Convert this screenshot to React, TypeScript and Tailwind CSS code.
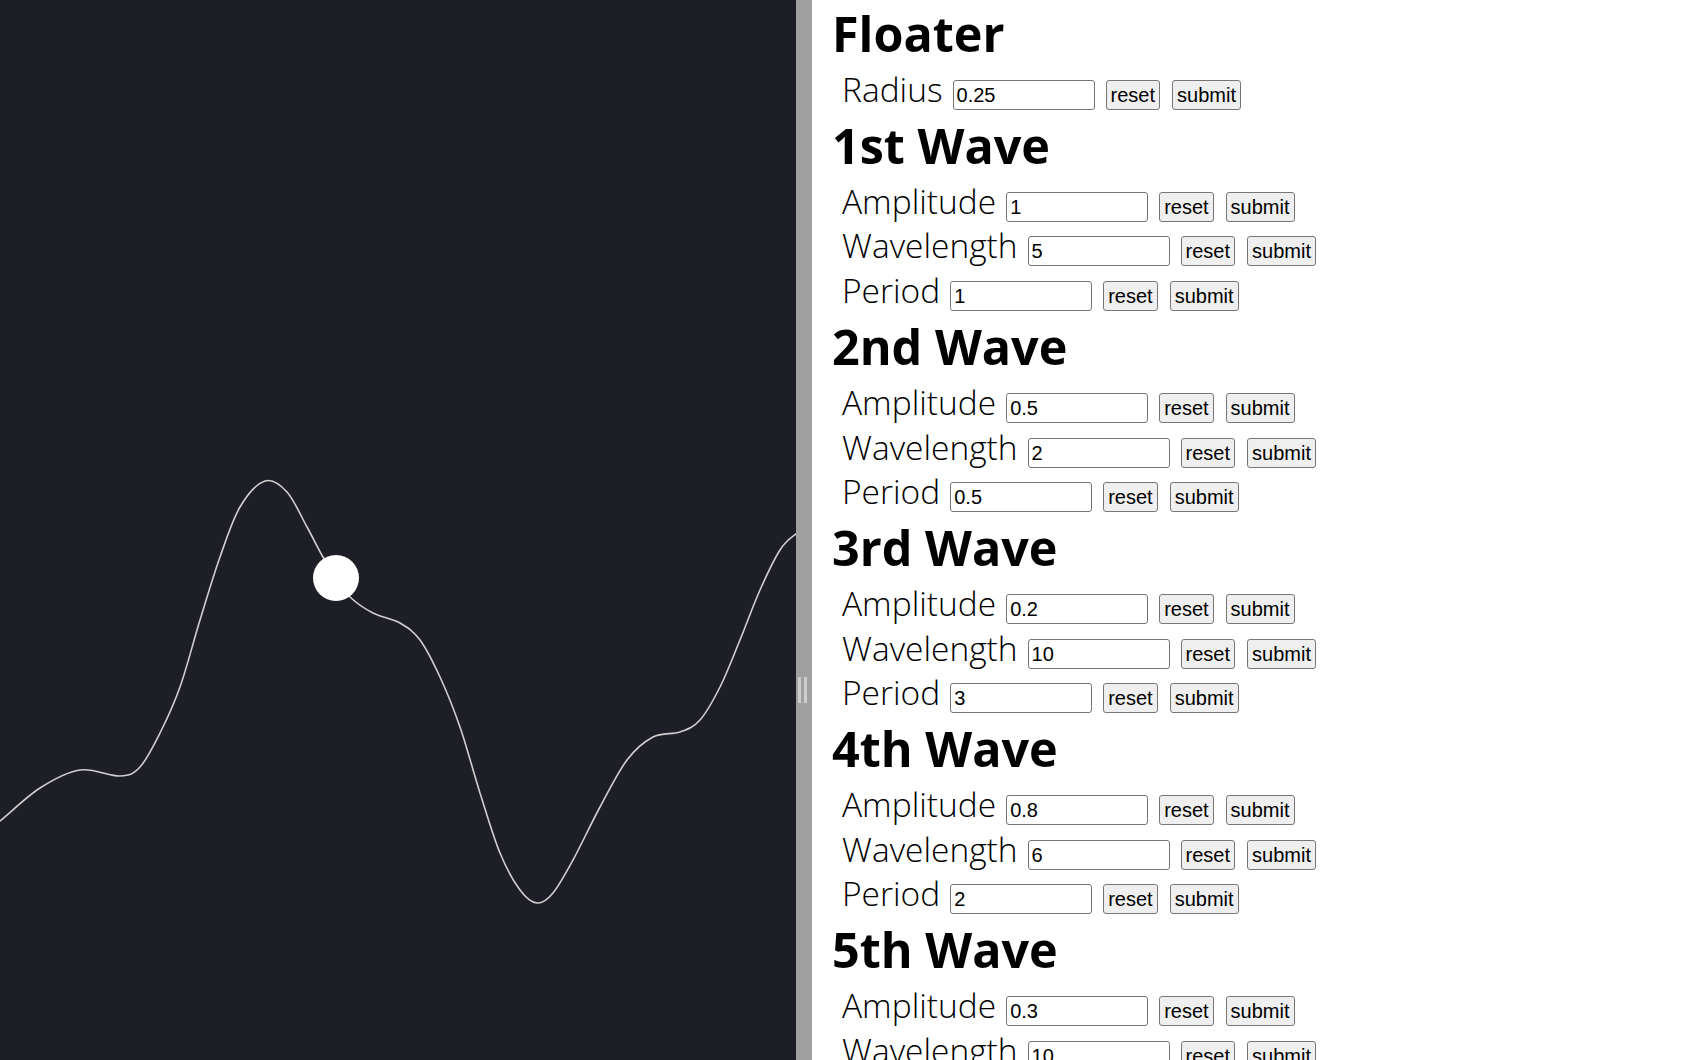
import React from 'react';

type Param = { label: string; value: string };
type Section = { title: string; params: Param[] };

const sections: Section[] = [
  { title: 'Floater', params: [{ label: 'Radius', value: '0.25' }] },
  {
    title: '1st Wave',
    params: [
      { label: 'Amplitude', value: '1' },
      { label: 'Wavelength', value: '5' },
      { label: 'Period', value: '1' },
    ],
  },
  {
    title: '2nd Wave',
    params: [
      { label: 'Amplitude', value: '0.5' },
      { label: 'Wavelength', value: '2' },
      { label: 'Period', value: '0.5' },
    ],
  },
  {
    title: '3rd Wave',
    params: [
      { label: 'Amplitude', value: '0.2' },
      { label: 'Wavelength', value: '10' },
      { label: 'Period', value: '3' },
    ],
  },
  {
    title: '4th Wave',
    params: [
      { label: 'Amplitude', value: '0.8' },
      { label: 'Wavelength', value: '6' },
      { label: 'Period', value: '2' },
    ],
  },
  {
    title: '5th Wave',
    params: [
      { label: 'Amplitude', value: '0.3' },
      { label: 'Wavelength', value: '10' },
      { label: 'Period', value: '4' },
    ],
  },
];

// sampled surface of the summed waves
const wavePoints: [number, number][] = [
  [-20, 836], [0, 821], [40, 788], [80, 770], [120, 776], [140, 767], [160, 733], [180, 687],
  [200, 620], [220, 557], [240, 507], [265, 481], [287, 492], [307, 527], [323, 557],
  [337, 579], [350, 597], [373, 613], [400, 623], [420, 640], [440, 677], [460, 727],
  [480, 793], [500, 853], [520, 890], [537, 903], [553, 893], [573, 860], [600, 807],
  [627, 760], [653, 737], [680, 732], [700, 720], [720, 687], [740, 640], [760, 590],
  [780, 550], [796, 534], [816, 522],
];

const smoothPath = (pts: [number, number][]) => {
  let d = `M${pts[0][0]},${pts[0][1]}`;
  for (let i = 0; i < pts.length - 1; i++) {
    const p0 = pts[i - 1] || pts[i];
    const p1 = pts[i];
    const p2 = pts[i + 1];
    const p3 = pts[i + 2] || p2;
    const c1x = p1[0] + (p2[0] - p0[0]) / 6;
    const c1y = p1[1] + (p2[1] - p0[1]) / 6;
    const c2x = p2[0] - (p3[0] - p1[0]) / 6;
    const c2y = p2[1] - (p3[1] - p1[1]) / 6;
    d += ` C${c1x.toFixed(1)},${c1y.toFixed(1)} ${c2x.toFixed(1)},${c2y.toFixed(1)} ${p2[0]},${p2[1]}`;
  }
  return d;
};

const ParamRow = ({ label, value }: Param) => (
  <div className="flex items-baseline pl-[10px]">
    <span className="text-[33.5px] leading-[44.7px] font-light">{label}</span>
    <input
      type="text"
      defaultValue={value}
      className="ml-[10px] w-[142px] h-[30px] px-[3px] border border-[#767676] rounded-[3px] bg-white text-[20px] text-black outline-none font-['Liberation_Sans',Arial,sans-serif]"
    />
    <button className="ml-[11px] h-[30px] px-[4px] border border-[#767676] rounded-[3px] bg-[#efefef] text-[20px] leading-none text-black font-['Liberation_Sans',Arial,sans-serif]">
      reset
    </button>
    <button className="ml-[12px] h-[30px] px-[4px] border border-[#767676] rounded-[3px] bg-[#efefef] text-[20px] leading-none text-black font-['Liberation_Sans',Arial,sans-serif]">
      submit
    </button>
  </div>
);

export default function App() {
  return (
    <div className="flex h-[1060px] w-full overflow-hidden bg-white font-['Open_Sans','Noto_Sans',sans-serif] text-black">
      <div className="w-[796px] shrink-0 h-full bg-[#1e1f26]">
        <svg viewBox="0 0 796 1060" className="w-full h-full block">
          <path d={smoothPath(wavePoints)} fill="none" stroke="#cfcfcf" strokeWidth="1.6" />
          <circle cx="336" cy="578" r="23" fill="#ffffff" />
        </svg>
      </div>
      <div className="w-[16px] shrink-0 h-full bg-[#a0a0a0] pt-[677px] pl-[2px]">
        <div className="flex gap-[3px] h-[26px]">
          <div className="w-[3px] h-full bg-[#cdcdcd]" />
          <div className="w-[3px] h-full bg-[#cdcdcd]" />
        </div>
      </div>
      <div className="flex-1 h-full overflow-hidden pl-[20px]">
        {sections.map(s => (
          <div key={s.title}>
            <h1 className="text-[48.5px] leading-[67px] font-bold">{s.title}</h1>
            {s.params.map(p => (
              <ParamRow key={p.label} {...p} />
            ))}
          </div>
        ))}
      </div>
    </div>
  );
}
